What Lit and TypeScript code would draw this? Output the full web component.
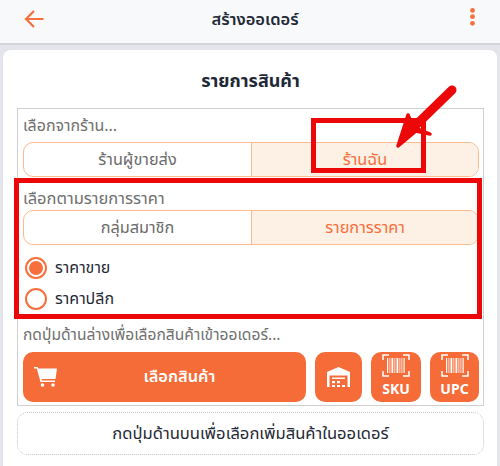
import { LitElement, html, css, svg } from 'lit';
import { customElement } from 'lit/decorators.js';

const barcode = svg`
  <path d="M1 6V1h6M21 1h6v5M1 17v5h6M27 17v5h-6" fill="none" stroke="#fff" stroke-width="1.500" />
  <path d="M5 4h1.200v15H5zM7.500 4h.8v15h-.8zM9.500 4h1.800v15H9.500zM12.500 4h.8v15h-.8zM14.500 4h1.800v15h-1.800zM17.500 4h.8v15h-.8zM19.500 4h.8v15h-.8zM21.500 4h1.200v15h-1.200z" fill="#fff" />
`;

@customElement('app-root')
export class AppRoot extends LitElement {
  static styles = css`
    :host {
      display: block;
      position: relative;
      width: 500px;
      height: 466px;
      overflow: hidden;
      background: #e3e5ea;
      font-family: "Noto Sans Thai", "Noto Sans", "Noto Sans CJK SC", sans-serif;
      color: #1f2937;
    }
    .header {
      height: 38px;
      background: #f8f9fb;
      border-bottom: 2px solid #d3d5da;
      display: flex;
      align-items: center;
      justify-content: space-between;
      padding: 0 25px 5px 24px;
    }
    .header-title {
      font-size: 16.500px;
      font-weight: 600;
      color: #1f2937;
      margin-right: 4px;
    }
    .card {
      margin: 5px 3px 0;
      height: 416px;
      box-sizing: border-box;
      background: #fff;
      border-radius: 8px 8px 0 0;
      padding: 0 13px 0 14px;
      display: flex;
      flex-direction: column;
    }
    .card-title {
      height: 58px;
      display: flex;
      align-items: center;
      justify-content: center;
      font-size: 18px;
      font-weight: 700;
      padding-top: 5px;
      box-sizing: border-box;
    }
    .box {
      border: 1px solid #d0d0d0;
      height: 298px;
      box-sizing: border-box;
      padding: 0 4px 0 5px;
      display: flex;
      flex-direction: column;
    }
    .label {
      font-size: 16px;
      color: #6f6f6f;
      height: 33px;
      flex: none;
      display: flex;
      align-items: center;
    }
    .seg {
      display: grid;
      grid-template-columns: 1fr 1fr;
      height: 35px;
      box-sizing: border-box;
      border: 1px solid #fdba8c;
      border-radius: 10px;
      overflow: hidden;
      font-size: 16.300px;
      color: #6b6b6b;
      flex: none;
    }
    .seg div {
      display: flex;
      align-items: center;
      justify-content: center;
      padding-top: 1px;
    }
    .seg .on {
      background: #fdf0e5;
      color: #f76f3c;
      border-left: 1px solid #fdba8c;
    }
    .price-label {
      font-size: 16.500px;
      padding-top: 10px;
      box-sizing: border-box;
    }
    .radios {
      display: flex;
      flex-direction: column;
      padding: 12px 0 0 2px;
      gap: 9px;
      height: 72px;
      box-sizing: border-box;
      flex: none;
    }
    .radio {
      display: flex;
      align-items: center;
      gap: 8px;
      height: 22px;
      font-size: 16px;
      color: #1f2937;
    }
    .dot {
      width: 22px;
      height: 22px;
      box-sizing: border-box;
      border: 2px solid #f76f3c;
      border-radius: 50%;
      padding: 2px;
      background-clip: content-box;
    }
    .dot.on {
      background-color: #f76f3c;
    }
    .hint {
      height: 35px;
      font-size: 15.600px;
    }
    .actions {
      display: flex;
      gap: 9px;
      height: 50px;
      flex: none;
    }
    .pick {
      flex: 1;
      background: #f56c39;
      border-radius: 10px;
      color: #fff;
      font-size: 16.400px;
      font-weight: 600;
      display: flex;
      align-items: center;
      padding-left: 11px;
    }
    .pick span {
      flex: 1;
      text-align: center;
      padding-right: 4px;
    }
    .tile {
      width: 49px;
      height: 50px;
      box-sizing: border-box;
      padding-top: 2px;
      background: #f56c39;
      border-radius: 10px;
      color: #fff;
      display: flex;
      flex-direction: column;
      align-items: center;
      font-family: "Noto Sans", sans-serif;
      font-size: 14px;
      font-weight: 700;
      line-height: 14px;
    }
    .tile span {
      margin-top: 5px;
    }
    .tile.store {
      width: 47px;
      padding-top: 0;
      justify-content: center;
    }
    .tile.sku {
      width: 50px;
    }
    .note {
      margin-top: 6px;
      height: 43px;
      box-sizing: border-box;
      border: 1px dotted #c4c4c4;
      border-radius: 10px;
      display: flex;
      align-items: center;
      justify-content: center;
      font-size: 16.600px;
    }
    .mark {
      position: absolute;
      border: 5px solid #ec0808;
      box-sizing: border-box;
      pointer-events: none;
    }
    .mark.shop {
      left: 311px;
      top: 118px;
      width: 115px;
      height: 55px;
    }
    .mark.price {
      left: 14px;
      top: 178px;
      width: 468px;
      height: 141px;
    }
    .arrow {
      position: absolute;
      left: 380px;
      top: 80px;
    }
  `;

  render() {
    return html`
      <div class="header">
        <svg width="20" height="20" viewBox="0 0 20 20" fill="none" stroke="#f76f3c" stroke-width="2.200">
          <path d="M19.500 10H2M10 2l-8 8 8 8" />
        </svg>
        <div class="header-title">สร้างออเดอร์</div>
        <svg width="5" height="22" viewBox="0 0 5 22" fill="#f76f3c">
          <circle cx="2.500" cy="2.400" r="2.400" />
          <circle cx="2.500" cy="8.700" r="2.400" />
          <circle cx="2.500" cy="15.300" r="2.400" />
        </svg>
      </div>
      <div class="card">
        <div class="card-title">รายการสินค้า</div>
        <div class="box">
          <div class="label">เลือกจากร้าน...</div>
          <div class="seg"><div>ร้านผู้ขายส่ง</div><div class="on">ร้านฉัน</div></div>
          <div class="label price-label">เลือกตามรายการราคา</div>
          <div class="seg"><div>กลุ่มสมาชิก</div><div class="on">รายการราคา</div></div>
          <div class="radios">
            <div class="radio"><div class="dot on"></div>ราคาขาย</div>
            <div class="radio"><div class="dot"></div>ราคาปลีก</div>
          </div>
          <div class="label hint">กดปุ่มด้านล่างเพื่อเลือกสินค้าเข้าออเดอร์...</div>
          <div class="actions">
            <div class="pick">
              <svg width="23" height="20" viewBox="0 0 23 20" fill="#fff">
                <path d="M0 0h3.500l.8 1.500H23l-1.500 10.500H7.500l.4 1.500H21V15H6.500L2.800 1.500H0z" />
                <circle cx="8.500" cy="18" r="1.800" />
                <circle cx="19" cy="18" r="1.800" />
              </svg>
              <span>เลือกสินค้า</span>
            </div>
            <div class="tile store">
              <svg width="23" height="20" viewBox="0 0 23 20" fill="#fff">
                <path d="M11.500 0 23 5v15h-2.500V8.500h-18V20H0V5z" />
                <path d="M5 10.500h13V12H5zM5 14h3v2.200H5zM10 14h3v2.200h-3zM5 18h3v2H5zM10 18h3v2h-3zM15 18h3v2h-3z" />
              </svg>
            </div>
            <div class="tile sku">
              <svg width="28" height="23" viewBox="0 0 28 23">${barcode}</svg>
              <span>SKU</span>
            </div>
            <div class="tile">
              <svg width="28" height="23" viewBox="0 0 28 23">${barcode}</svg>
              <span>UPC</span>
            </div>
          </div>
        </div>
        <div class="note">กดปุ่มด้านบนเพื่อเลือกเพิ่มสินค้าในออเดอร์</div>
      </div>
      <div class="mark shop"></div>
      <div class="mark price"></div>
      <svg class="arrow" width="90" height="80" viewBox="0 0 90 80" fill="#ec0808">
        <path d="M72 10 35 46" stroke="#ec0808" stroke-width="9" stroke-linecap="round" />
        <path d="M18 66 28 35 33 47 50 54 36 51Z" stroke="#ec0808" stroke-width="3.500" stroke-linejoin="round" />
      </svg>
    `;
  }
}
